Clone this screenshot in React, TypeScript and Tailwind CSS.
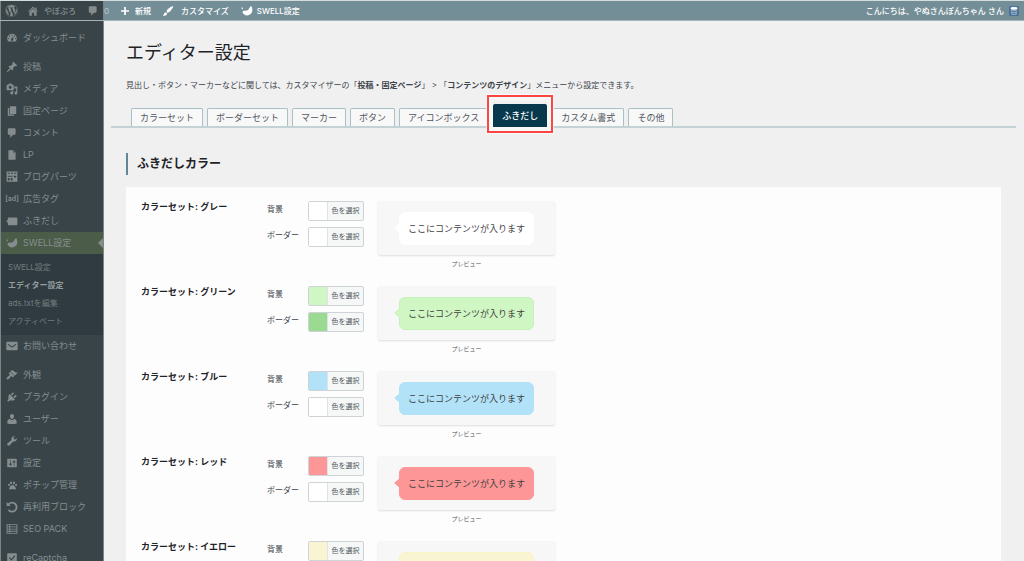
import React from "react";
import { FaWordpress, FaPaw } from "react-icons/fa";

const icons = {
  dashboard:
    "M3.76 16h12.48c1.1-1.37 1.76-3.11 1.76-5 0-4.42-3.58-8-8-8s-8 3.58-8 8c0 1.89.66 3.63 1.76 5zM10 4c.55 0 1 .45 1 1s-.45 1-1 1-1-.45-1-1 .45-1 1-1zM6 6c.55 0 1 .45 1 1s-.45 1-1 1-1-.45-1-1 .45-1 1-1zm8 0c.55 0 1 .45 1 1s-.45 1-1 1-1-.45-1-1 .45-1 1-1zm-5.37 5.55L12 7v6c0 1.1-.9 2-2 2s-2-.9-2-2c0-.57.24-1.08.63-1.45zM4 10c.55 0 1 .45 1 1s-.45 1-1 1-1-.45-1-1 .45-1 1-1zm12 0c.55 0 1 .45 1 1s-.45 1-1 1-1-.45-1-1 .45-1 1-1z",
  home: "M14 6.500V4h2v4.500l1.800 1.800-1.200 1.200L10 4.900l-6.600 6.600-1.200-1.200L10 2.500zM10 6.200l6 5.900V18h-4v-5H8v5H4v-5.900z",
  comment:
    "M5 2h9q.82 0 1.41.59T16 4v7q0 .82-.59 1.41T14 13h-2l-5 5v-5H5q-.82 0-1.41-.59T3 11V4q0-.82.59-1.41T5 2z",
  post: "M10.44 3.02l1.82-1.82 6.36 6.35-1.83 1.82c-1.05-.68-2.48-.57-3.41.36l-.75.75c-.92.93-1.04 2.35-.35 3.41l-1.83 1.82-2.41-2.41-2.8 2.79c-.42.42-3.38 2.71-3.8 2.29s1.86-3.39 2.28-3.81l2.79-2.79L4.1 9.36l1.83-1.82c1.05.69 2.48.57 3.4-.36l.75-.75c.93-.92 1.05-2.35.36-3.41z",
  media:
    "M13 11V4c0-.55-.45-1-1-1h-1.67L9 1H5L3.67 3H2c-.55 0-1 .45-1 1v7c0 .55.45 1 1 1h10c.55 0 1-.45 1-1zM7 4.5c1.38 0 2.5 1.12 2.5 2.5S8.38 9.5 7 9.5 4.5 8.38 4.5 7 5.62 4.5 7 4.5zM14 6h5v10.5c0 1.38-1.12 2.5-2.5 2.5S14 17.88 14 16.5s1.12-2.5 2.5-2.5c.17 0 .34.02.5.05V9h-3V6zm-4 8.05V13h2v3.5c0 1.38-1.12 2.5-2.5 2.5S7 17.88 7 16.5 8.12 14 9.5 14c.17 0 .34.02.5.05z",
  page: "M6.500 15V2H17v13zM5.500 16h8v2H3V5h2.500z",
  file: "M12 2l4 4v12H4V2h8zm0 4h3l-3-3v3z",
  parts:
    "M1 1h18v17H1zM3 3v1.500h3.500V3zM8.200 3v1.500h3.600V3zM13.500 3v1.500H17V3zM3 8v1.500h8V8zM3 11.500V16h3v-4.500zM8 11.500V16h3v-4.500zM13 8v3h4V8z",
  balloon: "M5 4h12q2 0 2 2v9q0 2-2 2H5q-2 0-2-2v-3L0 10.500l3-2V6q0-2 2-2z",
  swell:
    "M17 1.500C20 6 19.500 12 16 15c-4 3.500-10 3.500-13.500-2.500C2.500 10.500 4 9.500 6 9.300c2 .9 4 .5 5.500-.8C13.500 6.500 14.500 3 17 1.500zM.5 4.500c1.500-.8 3 0 2.800 1.500-.2 1-1.300 1.300-1.800.5z",
  mail: "M2 3h16q1.500 0 1.500 1.500v11q0 1.500-1.500 1.500H2Q.5 17 .5 15.500v-11Q.5 3 2 3zm1 3v2l7 5 7-5V6l-7 5z",
  appearance:
    "M14.48 11.06L7.41 3.99l1.5-1.5c.5-.56 2.3-.47 3.51.32 1.21.8 1.43 1.28 2.91 2.1 1.18.64 2.45 1.26 4.45.85zm-.71.71L6.7 4.7 4.93 6.47c-.39.39-.39 1.02 0 1.41l1.06 1.06c.39.39.39 1.03 0 1.42-.6.6-1.43 1.11-2.21 1.69-.35.26-.7.53-1.01.84C1.43 14.23.4 16.08 1.4 17.07c.99 1 2.84-.03 4.18-1.36.31-.31.58-.66.85-1.02.57-.78 1.08-1.61 1.69-2.21.39-.39 1.02-.39 1.41 0l1.06 1.06c.39.39 1.02.39 1.41 0z",
  plugin:
    "M13.11 4.36L9.87 7.6 8 5.73l3.24-3.24c.35-.34 1.05-.2 1.56.32.52.51.66 1.21.31 1.55zm-8 1.77l.91-1.12 9.01 9.01-1.19.84c-.71.71-2.63 1.16-3.82 1.16H6.14L4.9 17.26c-.59.59-1.54.59-2.12 0-.59-.58-.59-1.53 0-2.12l1.24-1.24v-3.88c0-1.13.4-3.19 1.09-3.89zm7.26 3.97l3.24-3.24c.34-.35 1.04-.21 1.55.31.52.51.66 1.21.31 1.55l-3.24 3.25z",
  user: "M10 1.500c2.400 0 3.600 1.800 3.400 4C13.200 8 12 9.800 10 9.800S6.800 8 6.600 5.500c-.2-2.200 1-4 3.400-4zM6.500 10l3.500 2.200L13.500 10c2.500.3 4.300 2 4.300 4.500v3c-4.500 1.300-11 1.300-15.600 0v-3c0-2.500 1.800-4.200 4.300-4.500z",
  tools:
    "M16.68 9.77c-1.34 1.34-3.3 1.67-4.95.99l-5.41 6.52c-.99.99-2.59.99-3.58 0s-.99-2.59 0-3.57l6.52-5.42c-.68-1.65-.35-3.61.99-4.95 1.28-1.28 3.12-1.62 4.72-1.06l-2.89 2.89 2.82 2.82 2.86-2.87c.53 1.58.18 3.39-1.08 4.65z",
  settings:
    "M18 16V4c0-.55-.45-1-1-1H3c-.55 0-1 .45-1 1v12c0 .55.45 1 1 1h14c.55 0 1-.45 1-1zM8 11h1c.55 0 1 .45 1 1s-.45 1-1 1H8v1.5c0 .28-.22.5-.5.5s-.5-.22-.5-.5V13H6c-.55 0-1-.45-1-1s.45-1 1-1h1V5.5c0-.28.22-.5.5-.5s.5.22.5.5V11zm5-2h-1c-.55 0-1-.45-1-1s.45-1 1-1h1V5.5c0-.28.22-.5.5-.5s.5.22.5.5V7h1c.55 0 1 .45 1 1s-.45 1-1 1h-1v5.500c0 .28-.22.5-.5.5s-.5-.22-.5-.5V9z",
  reuse:
    "M1 1.500l2.500 2.600A9 9 0 1 1 3 15.700l2.200-2A6 6 0 1 0 5.600 6.300L8 8.500H1z",
  list: "M1 2h18v16H1zM2.500 3.500v2.200h3V3.500zM7 3.500v2.200h10.500V3.500zM2.500 7.200v2.200h3V7.200zM7 7.200v2.200h10.500V7.200zM2.500 10.800V13h3v-2.200zM7 10.800V13h10.500v-2.200zM2.500 14.400v2.200h3v-2.200zM7 14.400v2.200h10.500v-2.200z",
  check: "M3 2h14q1 0 1 1v14q0 1-1 1H3q-1 0-1-1V3q0-1 1-1zM5 10l4 4.500L15.500 7 14 5.500 9 11.500 6.500 8.500z",
  plus: "M8.300 2h3.400v6.300H18v3.400h-6.300V18H8.300v-6.300H2V8.300h6.300z",
  brush:
    "M18.33 3.57s.27-.8-.31-1.36c-.53-.52-1.22-.24-1.22-.24-.61.3-5.76 3.47-7.67 5.57-.86.96-2.06 3.79-1.09 4.82.92.98 3.96-.17 4.79-1 2.06-2.06 5.21-7.17 5.5-7.79zM1.4 17.65c2.37-1.56 1.46-3.41 3.23-4.64.93-.65 2.22-.62 3.08.29.63.67.8 2.57-.16 3.46-1.57 1.45-4 1.55-6.15.89z",
};

type IconName = keyof typeof icons;

function Icon({ name, className = "size-3" }: { name: IconName; className?: string }) {
  return (
    <svg viewBox="0 0 20 20" fill="currentColor" fillRule="evenodd" className={className} aria-hidden="true">
      <path d={icons[name]} />
    </svg>
  );
}

interface MenuItem {
  label: string;
  icon: IconName | "ad" | "paw";
  current?: boolean;
}

const menuTop: MenuItem[] = [
  { label: "投稿", icon: "post" },
  { label: "メディア", icon: "media" },
  { label: "固定ページ", icon: "page" },
  { label: "コメント", icon: "comment" },
  { label: "LP", icon: "file" },
  { label: "ブログパーツ", icon: "parts" },
  { label: "広告タグ", icon: "ad" },
  { label: "ふきだし", icon: "balloon" },
  { label: "SWELL設定", icon: "swell", current: true },
];

const subMenu = ["SWELL設定", "エディター設定", "ads.txtを編集", "アクティベート"];

const menuBottom: MenuItem[] = [
  { label: "外観", icon: "appearance" },
  { label: "プラグイン", icon: "plugin" },
  { label: "ユーザー", icon: "user" },
  { label: "ツール", icon: "tools" },
  { label: "設定", icon: "settings" },
  { label: "ポチップ管理", icon: "paw" },
  { label: "再利用ブロック", icon: "reuse" },
  { label: "SEO PACK", icon: "list" },
];

const tabs = [
  "カラーセット",
  "ボーダーセット",
  "マーカー",
  "ボタン",
  "アイコンボックス",
  "ふきだし",
  "カスタム書式",
  "その他",
];

const colorSets = [
  { id: "gray", name: "グレー", bg: "#ffffff", border: "#ffffff", line: "#ffffff" },
  { id: "green", name: "グリーン", bg: "#d0f7c3", border: "#9bdb91", line: "#c4f1b7" },
  { id: "blue", name: "ブルー", bg: "#b2e2f8", border: "#ffffff", line: "#b2e2f8" },
  { id: "red", name: "レッド", bg: "#fd9696", border: "#ffffff", line: "#fd9696" },
  { id: "yellow", name: "イエロー", bg: "#f9f5d2", border: "#fbe593", line: "#f9f3c8" },
];

function MenuLink({ label, icon, current }: MenuItem) {
  return (
    <li className={current ? "bg-[#4b5c48]" : ""}>
      <a href="#" className="relative flex h-[22px] items-center gap-[5px] pl-[5px] text-[9px]">
        <span className="flex w-3 justify-center">
          {icon === "ad" && <span className="text-[7px] font-semibold">[ad]</span>}
          {icon === "paw" && <FaPaw className="size-[9px]" />}
          {icon !== "ad" && icon !== "paw" && <Icon name={icon} />}
        </span>
        {label}
        {current && (
          <span className="absolute right-0 top-[6px] border-y-[5px] border-r-[5px] border-y-transparent border-r-[#868c88]"></span>
        )}
      </a>
    </li>
  );
}

function AdminBar() {
  return (
    <header className="flex h-5 shrink-0 items-stretch border-b border-[#a3b5ba] bg-[#748e97] text-[8px] font-medium text-white">
      <div className="flex w-[104px] shrink-0 items-center border-x border-x-[#7b8486] bg-[#384448] pl-[4px] text-[#858d8f]">
        <a href="#" aria-label="WordPress">
          <FaWordpress className="size-[13px]" />
        </a>
        <a href="#" className="ml-[9px] flex items-center gap-[5px]">
          <Icon name="home" />
          やぼぷろ
        </a>
        <a href="#" className="ml-[11px]" aria-label="コメント">
          <Icon name="comment" />
        </a>
      </div>
      <span className="flex w-4 items-center text-[#b4c1c6]">0</span>
      <a href="#" className="flex items-center gap-[5px]">
        <Icon name="plus" className="size-[10px]" />
        新規
      </a>
      <a href="#" className="ml-[11px] flex items-center gap-[7px]">
        <Icon name="brush" />
        カスタマイズ
      </a>
      <a href="#" className="ml-3 flex items-center gap-1">
        <Icon name="swell" />
        SWELL設定
      </a>
      <a href="#" className="ml-auto flex items-center gap-[5px] pr-[5px]">
        こんにちは、やぬさんぽんちゃん さん
        <svg viewBox="0 0 10 10" className="size-[10px]" aria-hidden="true">
          <rect width="10" height="10" rx="1" fill="#4c7397" />
          <rect x="2" y="2" width="6" height="7" rx="2" fill="#8fa9c2" />
          <ellipse cx="5" cy="2.200" rx="3.500" ry="1.300" fill="#ffffff" />
          <path d="M2.500 5.500h5M3.500 7.500h3" stroke="#4c7397" strokeWidth="0.800" />
        </svg>
      </a>
    </header>
  );
}

function Sidebar() {
  return (
    <nav className="w-[104px] shrink-0 border-x border-x-[#7b8486] bg-[#384448] pt-[6px] text-[#858d8f]">
      <ul>
        <MenuLink label="ダッシュボード" icon="dashboard" />
      </ul>
      <ul className="mt-[7px]">
        {menuTop.map((item) => (
          <MenuLink key={item.label} {...item} />
        ))}
      </ul>
      <ul className="bg-[#2f3b40] pb-[5px] pt-1">
        {subMenu.map((label) => (
          <li key={label}>
            <a
              href="#"
              className={
                label === "エディター設定"
                  ? "flex h-[18px] items-center pl-[7px] text-[8px] font-bold text-[#949b9d]"
                  : "flex h-[18px] items-center pl-[7px] text-[8px] text-[#737c7f]"
              }
            >
              {label}
            </a>
          </li>
        ))}
      </ul>
      <ul>
        <MenuLink label="お問い合わせ" icon="mail" />
      </ul>
      <ul className="mt-[7px]">
        {menuBottom.map((item) => (
          <MenuLink key={item.label} {...item} />
        ))}
      </ul>
      <ul className="mt-[7px]">
        <MenuLink label="reCaptcha" icon="check" />
      </ul>
    </nav>
  );
}

function Tabs() {
  return (
    <div
      role="tablist"
      className="ml-[7px] mr-2 mt-[11px] flex h-6 items-end gap-1 border-b-2 border-[#c3d2d5] pl-5"
    >
      {tabs.map((tab) =>
        tab === "ふきだし" ? (
          <div key={tab} className="relative mx-px -mb-px">
            <button
              role="tab"
              aria-selected="true"
              className="h-[23px] rounded-t-xs bg-[#07384c] px-[9px] text-[9px] font-medium text-white"
            >
              {tab}
            </button>
            <span className="pointer-events-none absolute -inset-[6px] border-2 border-[#fb4643] outline outline-white/60"></span>
            <span className="pointer-events-none absolute -inset-1 border-4 border-[#f6f7f7]"></span>
          </div>
        ) : (
          <button
            key={tab}
            role="tab"
            aria-selected="false"
            className="h-[18px] rounded-t-xs border border-b-0 border-[#a9c0c6] bg-[#f8f8f8] px-2 text-[9px] text-[#50575e]"
          >
            {tab}
          </button>
        ),
      )}
    </div>
  );
}

interface ColorFieldProps {
  id: string;
  label: string;
  color: string;
}

function ColorField({ id, label, color }: ColorFieldProps) {
  return (
    <div className="flex items-start">
      <label htmlFor={id} className="w-[41px] text-[8px] leading-4 text-[#3c434a]">
        {label}
      </label>
      <button
        id={id}
        className="flex h-5 w-14 overflow-hidden rounded-xs border border-[#cdd3d7] bg-[#f6f7f7] text-[7px] text-[#50575e]"
      >
        <span className="h-full w-[19px] border-r border-[#dfe3e5]" style={{ backgroundColor: color }}></span>
        <span className="flex h-full flex-1 items-center justify-center">色を選択</span>
      </button>
    </div>
  );
}

function BalloonPreview({ bg, line }: { bg: string; line: string }) {
  return (
    <figure className="ml-[14px] w-[177px]">
      <div className="flex h-[54px] items-center rounded-xs bg-[#f7f7f7] pl-[21px] shadow-[0_1px_2px_rgba(0,0,0,0.12)]">
        <div
          className="relative rounded-md border px-2 py-2 text-[9px] leading-[15px] text-[#3f3f3f]"
          style={{ backgroundColor: bg, borderColor: line }}
        >
          <svg viewBox="0 0 6 10" className="absolute -left-[6px] top-[10px] h-[10px] w-[6px]" aria-hidden="true">
            <path d="M6 0.500L0.700 5L6 9.500" fill={bg} stroke={line} />
          </svg>
          ここにコンテンツが入ります
        </div>
      </div>
      <figcaption className="mt-1 text-center text-[6px] leading-[10px] text-[#50575e]">プレビュー</figcaption>
    </figure>
  );
}

export default function App() {
  return (
    <div className="flex h-screen flex-col overflow-hidden border-t border-[#d5dcde] bg-[#f0f0f1] font-['Inter','Noto_Sans_CJK_JP',sans-serif] text-[#1d2327]">
      <AdminBar />
      <div className="flex flex-1">
        <Sidebar />
        <main className="min-w-0 flex-1 pt-5">
          <h1 className="pl-[22px] text-[18px] leading-6">エディター設定</h1>
          <p className="mt-3 pl-[22px] text-[8px] leading-4 text-[#3c434a]">
            見出し・ボタン・マーカーなどに関しては、カスタマイザーの「<b>投稿・固定ページ</b>」 &gt; 「
            <b>コンテンツのデザイン</b>」メニューから設定できます。
          </p>
          <Tabs />
          <h2 className="ml-[22px] mt-[25px] border-l-2 border-[#5f8796] pl-[9px] text-[12px] font-bold leading-[22px]">
            ふきだしカラー
          </h2>
          <section className="ml-[22px] mr-[23px] mt-3 bg-[#fdfdfd] pl-[15px] pt-[14px]">
            {colorSets.map((set) => (
              <div key={set.id} className="flex items-start pb-[17px]">
                <h3 className="w-[126px] text-[9px] font-bold leading-3">カラーセット: {set.name}</h3>
                <div className="flex flex-col gap-[6px]">
                  <ColorField id={`${set.id}-bg`} label="背景" color={set.bg} />
                  <ColorField id={`${set.id}-border`} label="ボーダー" color={set.border} />
                </div>
                <BalloonPreview bg={set.bg} line={set.line} />
              </div>
            ))}
          </section>
        </main>
      </div>
    </div>
  );
}
